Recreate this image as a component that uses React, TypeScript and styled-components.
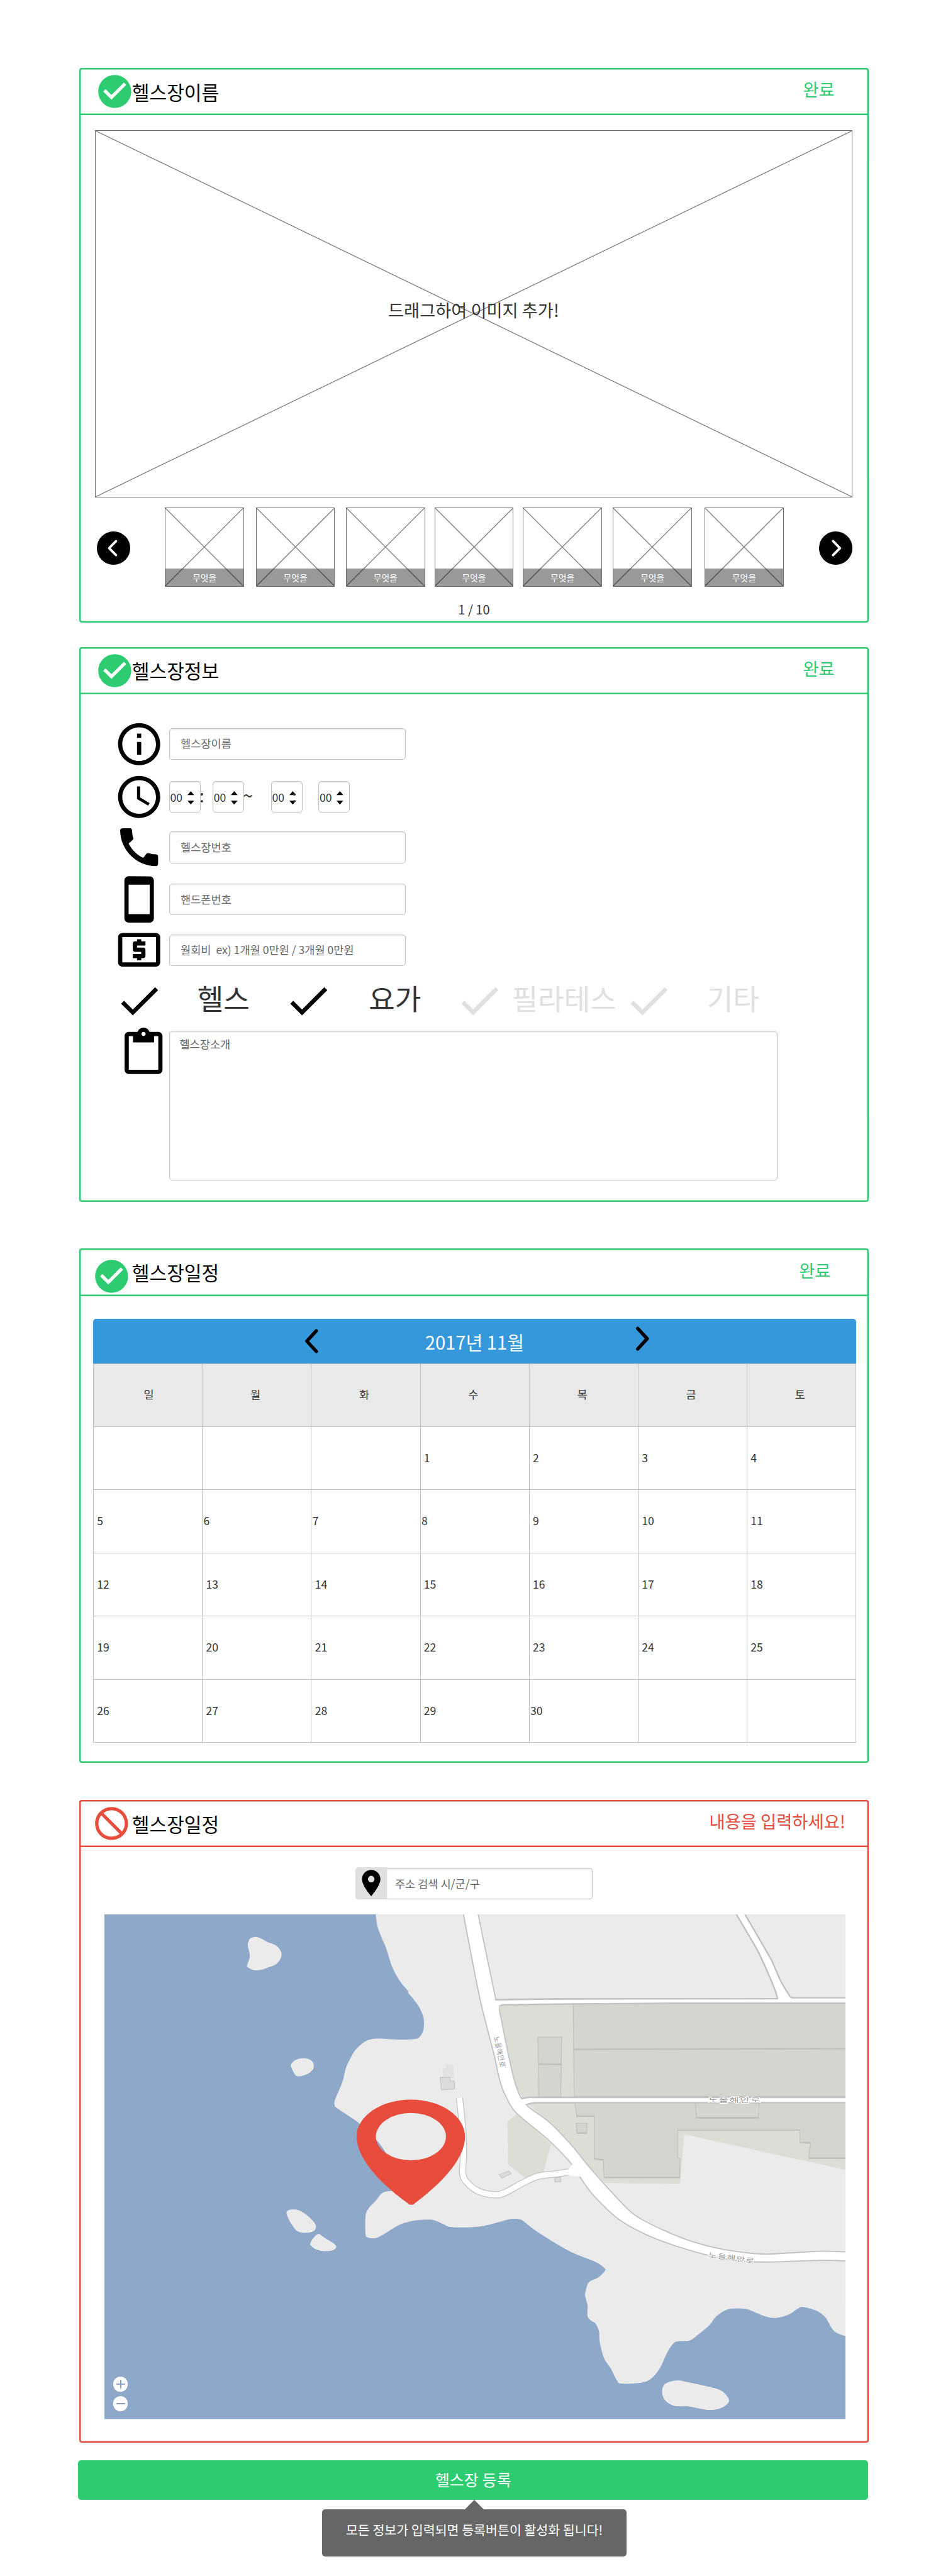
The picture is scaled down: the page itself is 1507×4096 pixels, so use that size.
import React from "react";
import styled, { createGlobalStyle, css } from "styled-components";
import {
  MdCheckCircle,
  MdBlock,
  MdOutlineInfo,
  MdAccessTime,
  MdCall,
  MdSmartphone,
  MdLocalAtm,
  MdCheck,
  MdContentPaste,
  MdPlace,
} from "react-icons/md";

/* ---------- tokens ---------- */

const SCALE = 1507 / 2400;
// Design units (2400-wide artboard) to CSS pixels.
const u = (n: number) => `${(n * SCALE).toFixed(3)}px`;

const GREEN = "#2ecc71";
const RED = "#e74c3c";
const BLUE = "#3498db";
const INK = "#333333";
const LINE = "#c0c0c0";
const WIRE = "#707070";

const GlobalStyle = createGlobalStyle`
  *, *::before, *::after { box-sizing: border-box; }
  html, body { margin: 0; padding: 0; background: #fff; }
  body {
    font-family: "Noto Sans CJK KR", "Noto Sans", sans-serif;
    color: ${INK};
    -webkit-font-smoothing: antialiased;
  }
`;

/* ---------- page and panels ---------- */

const Page = styled.main`
  width: 1507px;
  height: 4096px;
  overflow: hidden;
  padding: ${u(172)} 0 0 ${u(200)};
  display: flex;
  flex-direction: column;
  align-items: flex-start;
`;

const Panel = styled.section<{ $tone: string; $h: number; $after: number }>`
  flex: none;
  width: ${u(2000)};
  height: ${(p) => u(p.$h)};
  margin-bottom: ${(p) => u(p.$after)};
  border-radius: 4px;
  box-shadow: inset 0 0 0 2.5px ${(p) => p.$tone};
`;

const PanelHeader = styled.header<{ $tone: string; $end: number }>`
  height: ${u(120)};
  display: flex;
  align-items: center;
  padding-right: ${(p) => u(p.$end)};
  box-shadow: inset 0 -2.5px 0 ${(p) => p.$tone};
`;

const StatusSlot = styled.div<{ $inset: number; $drop: number }>`
  flex: none;
  width: ${u(134)};
  height: ${u(100)};
  padding-left: ${(p) => u(p.$inset)};
  margin-top: ${(p) => u(p.$drop * 2)};
  svg {
    display: block;
    width: ${u(100)};
    height: ${u(100)};
    color: ${GREEN};
  }
`;

const StatusSlotError = styled(StatusSlot)`
  svg {
    color: ${RED};
    transform: scaleX(-1);
  }
`;

const Title = styled.h2`
  margin: ${u(3)} 0 0;
  font-size: ${u(48)};
  line-height: ${u(70)};
  font-weight: 400;
  color: #000;
`;

const State = styled.span<{ $tone: string }>`
  margin-left: auto;
  margin-bottom: ${u(14)};
  font-size: ${u(43.6)};
  line-height: ${u(64)};
  color: ${(p) => p.$tone};
`;

/* ---------- gallery ---------- */

const WireBox = styled.div`
  position: relative;
  border: 1px solid ${WIRE};
`;

const WireCross = styled.svg`
  position: absolute;
  inset: 0;
  width: 100%;
  height: 100%;
`;

const Hero = styled(WireBox)`
  margin: ${u(38)} 0 0 ${u(40)};
  width: ${u(1918)};
  height: ${u(930)};
  display: flex;
  align-items: center;
  justify-content: center;
  padding-bottom: ${u(24)};
`;

const HeroText = styled.span`
  position: relative;
  font-size: ${u(43.4)};
  line-height: ${u(64)};
`;

const Strip = styled.div`
  margin-top: ${u(26)};
  height: ${u(200)};
  padding-left: ${u(46)};
  padding-right: ${u(42)};
  display: flex;
  align-items: center;
`;

const RoundButton = styled.button`
  flex: none;
  width: ${u(84)};
  height: ${u(84)};
  margin: ${u(4)} 0 0;
  padding: 0;
  border: 0;
  border-radius: 50%;
  background: #000;
  svg {
    display: block;
    width: 100%;
    height: 100%;
  }
`;

const Thumbs = styled.div`
  flex: 1;
  padding-left: ${u(88)};
  display: flex;
`;

const Thumb = styled(WireBox)<{ $gap: number }>`
  flex: none;
  width: ${u(200)};
  height: ${u(200)};
  margin-right: ${(p) => u(p.$gap)};
  display: flex;
  flex-direction: column;
  justify-content: flex-end;
`;

const Caption = styled.span`
  position: relative;
  height: ${u(45)};
  display: flex;
  align-items: center;
  justify-content: center;
  background: rgba(0, 0, 0, 0.4);
  color: #fff;
  font-size: ${u(22)};
  line-height: ${u(32)};
`;

const Pager = styled.div`
  margin-top: ${u(33)};
  text-align: center;
  font-size: ${u(32)};
  line-height: ${u(48)};
`;

/* ---------- info form ---------- */

const FormRow = styled.div<{ $top: number }>`
  margin-top: ${(p) => u(p.$top)};
  height: ${u(80)};
  padding-left: ${u(88)};
  display: flex;
  align-items: center;
`;

const RowIcon = styled.div`
  flex: none;
  width: ${u(140)};
  svg {
    display: block;
    width: ${u(128)};
    height: ${u(128)};
    color: #000;
  }
`;

const fieldLook = css`
  border: 1px solid ${LINE};
  border-radius: ${u(8)};
  background: #fff;
  box-shadow: inset 0 ${u(2)} ${u(4)} rgba(0, 0, 0, 0.1);
  font-size: ${u(28)};
  line-height: ${u(40)};
`;

const Field = styled.div`
  ${fieldLook}
  width: ${u(600)};
  height: ${u(80)};
  padding: 0 0 ${u(3)} ${u(27.5)};
  display: flex;
  align-items: center;
  color: #666;
  white-space: pre;
`;

const TimeBox = styled.div`
  ${fieldLook}
  flex: none;
  width: ${u(80)};
  height: ${u(80)};
  padding-left: ${u(1.4)};
  display: flex;
  align-items: center;
  svg {
    margin: ${u(4)} 0 0 ${u(12.5)};
    width: ${u(17)};
    height: ${u(34)};
  }
`;

const Separator = styled.span<{ $w: number; $shift: number }>`
  position: relative;
  flex: none;
  width: ${(p) => u(p.$w)};
  text-indent: ${(p) => u(p.$shift)};
  margin-bottom: ${u(10)};
  font-size: ${u(44)};
  line-height: ${u(64)};
  white-space: nowrap;
`;

const Checks = styled.div`
  margin-top: ${u(24)};
  height: ${u(128)};
  padding-left: ${u(88)};
  display: flex;
`;

const CheckItem = styled.div<{ $on: boolean; $extra: number }>`
  flex: none;
  width: ${(p) => u(428 + p.$extra)};
  display: flex;
  align-items: center;
  color: ${(p) => (p.$on ? INK : "#e0e0e0")};
  svg {
    flex: none;
    width: ${u(128)};
    height: ${u(128)};
    margin-right: ${(p) => u(p.$extra)};
    color: ${(p) => (p.$on ? "#000" : "#e0e0e0")};
  }
`;

const CheckLabel = styled.span`
  flex: 1;
  margin-bottom: ${u(14)};
  text-align: center;
  font-size: ${u(72)};
  line-height: ${u(104)};
  white-space: nowrap;
`;

const IntroRow = styled.div`
  margin-top: ${u(4)};
  padding-left: ${u(100)};
  display: flex;
  align-items: flex-start;
`;

const IntroIcon = styled(RowIcon)`
  width: ${u(128)};
`;

const TextArea = styled.div`
  ${fieldLook}
  margin-top: ${u(8)};
  width: ${u(1540)};
  height: ${u(380)};
  padding: ${u(12)} ${u(25)};
  color: #666;
`;

/* ---------- calendar ---------- */

const Calendar = styled.div`
  margin: ${u(58)} 0 0 ${u(36)};
  width: ${u(1932)};
`;

const MonthBar = styled.div`
  height: ${u(112)};
  padding-left: ${u(11)};
  border-radius: ${u(8)} ${u(8)} 0 0;
  background: ${BLUE};
  display: flex;
  justify-content: center;
  align-items: center;
  svg {
    flex: none;
    width: ${u(36)};
    height: ${u(62)};
    overflow: visible;
  }
`;

const MonthTitle = styled.span`
  width: ${u(802)};
  padding-right: ${u(12)};
  margin-top: ${u(4)};
  text-align: center;
  color: #fff;
  font-size: ${u(46.5)};
  line-height: ${u(70)};
`;

const Days = styled.div`
  display: grid;
  grid-template-columns: repeat(7, 1fr);
  grid-auto-rows: ${u(160)};
  border-right: 1px solid ${LINE};
  border-bottom: 1px solid ${LINE};
  font-size: ${u(28)};
  line-height: ${u(40)};
`;

const WeekdayCell = styled.div<{ $shift: number }>`
  display: flex;
  align-items: center;
  justify-content: center;
  padding-bottom: ${u(4)};
  padding-right: ${(p) => u(Math.max(0, -p.$shift * 2))};
  padding-left: ${(p) => u(Math.max(0, p.$shift * 2))};
  background: #e9e9e9;
  box-shadow: inset 1px 1px 0 ${LINE};
`;

const DayCell = styled.div`
  display: flex;
  align-items: center;
  padding: 0 0 ${u(3)} ${u(3.6)};
  white-space: pre;
  box-shadow: inset 1px 1px 0 ${LINE};
`;

/* ---------- location ---------- */

const Search = styled.div`
  margin: ${u(50)} auto 0;
  width: ${u(600)};
  height: ${u(82)};
  display: flex;
  align-items: flex-start;
`;

const SearchAddon = styled.div`
  flex: none;
  width: ${u(80)};
  height: ${u(81)};
  border-radius: ${u(8)} 0 0 ${u(8)};
  background: #e0e0e0;
  border-bottom: 1px solid ${LINE};
  svg {
    display: block;
    width: ${u(80)};
    height: ${u(80)};
    margin-top: ${u(1)};
    color: #000;
  }
`;

const SearchField = styled(Field)`
  margin-top: ${u(2)};
  width: ${u(520)};
  padding-left: ${u(20)};
  border-left: 0;
  border-radius: 0 ${u(8)} ${u(8)} 0;
`;

const MapFrame = styled.div`
  position: relative;
  margin: ${u(38)} 0 0 ${u(64)};
  width: ${u(1876)};
  height: ${u(1278)};
  > svg {
    display: block;
    width: 100%;
    height: 100%;
  }
`;

const ZoomControls = styled.div`
  position: absolute;
  left: ${u(22)};
  bottom: ${u(20)};
  display: flex;
  flex-direction: column;
  gap: ${u(12)};
`;

const ZoomButton = styled.button`
  width: ${u(38)};
  height: ${u(38)};
  padding: 0;
  border: 0;
  border-radius: 50%;
  background: #fff;
  svg {
    display: block;
    width: 100%;
    height: 100%;
  }
`;

/* ---------- footer ---------- */

const Submit = styled.button`
  flex: none;
  width: ${u(2000)};
  height: ${u(100)};
  margin: 0 0 0 ${u(-2)};
  padding: 0 0 ${u(4)};
  border: 0;
  border-radius: ${u(8)};
  background: ${GREEN};
  color: #fff;
  font-family: inherit;
  font-size: ${u(40)};
  line-height: ${u(58)};
`;

const TipArrow = styled.div`
  flex: none;
  margin-left: ${u(977)};
  border: ${u(24)} solid transparent;
  border-top-width: 0;
  border-bottom-color: #666;
`;

const Tip = styled.div`
  flex: none;
  margin-left: ${u(616)};
  width: ${u(770)};
  height: ${u(120)};
  padding-bottom: ${u(17)};
  border-radius: ${u(8)};
  background: #666;
  color: #fff;
  display: flex;
  align-items: center;
  justify-content: center;
  font-size: ${u(32.8)};
  line-height: ${u(46)};
  white-space: nowrap;
`;

/* ---------- drawings ---------- */

const Cross = () => (
  <WireCross viewBox="0 0 100 100" preserveAspectRatio="none">
    <path
      d="M0 0L100 100M100 0L0 100"
      stroke="#808080"
      strokeWidth="1.35"
      vectorEffect="non-scaling-stroke"
      fill="none"
    />
  </WireCross>
);

const RoundChevron = ({ next = false }: { next?: boolean }) => (
  <svg viewBox="0 0 84 84" fill="none">
    <path
      d={next ? "M35.5 24.5L53 42.5L35.5 60" : "M48.5 24.5L31 42.5L48.5 60"}
      stroke="#fff"
      strokeWidth="6"
      strokeLinecap="round"
      strokeLinejoin="round"
    />
  </svg>
);

const MonthChevron = ({ next = false }: { next?: boolean }) => (
  <svg viewBox="0 0 36 62" fill="none">
    <path
      d={next ? "M6 -1L30 25L6 51" : "M30 5L6 31L30 57"}
      stroke="#000"
      strokeWidth="8.6"
      strokeLinecap="round"
      strokeLinejoin="round"
    />
  </svg>
);

const Stepper = () => (
  <svg viewBox="0 0 17 34">
    <path d="M0 10L8.5 0L17 10zM0 24L8.5 34L17 24z" fill="#000" />
  </svg>
);

type Pt = [number, number];

const parse = (s: string): Pt[] =>
  s
    .trim()
    .split(/\s+/)
    .map((p) => p.split(",").map(Number) as Pt);

// Catmull-Rom spline through the points, as cubic segments.
const spline = (pts: Pt[], closed = false) => {
  const n = pts.length;
  const at = (i: number) =>
    closed ? pts[(i + n) % n] : pts[Math.max(0, Math.min(n - 1, i))];
  let d = "";
  for (let i = 0; i < (closed ? n : n - 1); i++) {
    const [a, b, c, e] = [at(i - 1), at(i), at(i + 1), at(i + 2)];
    const x1 = b[0] + (c[0] - a[0]) / 6;
    const y1 = b[1] + (c[1] - a[1]) / 6;
    const x2 = c[0] - (e[0] - b[0]) / 6;
    const y2 = c[1] - (e[1] - b[1]) / 6;
    d += `C${x1.toFixed(1)} ${y1.toFixed(1)} ${x2.toFixed(1)} ${y2.toFixed(1)} ${c[0]} ${c[1]}`;
  }
  return d;
};

const COAST = parse(`
951,4848 954,4872 959,4890 968,4912 977,4933 985,4959 993,4982 1004,5004 1017,5024 1031,5040 1034,5048
1045,5061 1059,5080 1071,5106 1073,5127 1070,5145 1060,5160 1044,5164 1004,5165 973,5163 947,5163 927,5168
913,5178 898,5193 886,5214 875,5238 867,5271 856,5298 847,5320 847,5332 855,5340 900,5370 912,5380 952,5418
979,5456 998,5500 1004,5546 992,5548 968,5553 951,5573 933,5592 925,5612 925,5658 931,5666 949,5668 968,5660
995,5643 1021,5630 1060,5622 1096,5622 1119,5631 1143,5640 1198,5640 1231,5635 1270,5625 1297,5619 1318,5621
1336,5634 1356,5649 1408,5682 1454,5707 1507,5728 1530,5744 1530,5752 1513,5768 1491,5779 1483,5799 1481,5814
1487,5838 1487,5865 1496,5877 1508,5885 1516,5904 1518,5931 1529,5972 1546,5998 1562,6029 1573,6036 1623,6034
1649,6023 1671,5996 1687,5961 1704,5935 1717,5929 1746,5927 1770,5910 1796,5888 1812,5867 1835,5851 1855,5846
1888,5847 1912,5856 1940,5867 1963,5870 1993,5863 2017,5848 2032,5842 2065,5851 2088,5867 2105,5895 2118,5908
2140,5916`);

const ISLANDS = [
  "629,4917 633,4909 647,4905 660,4909 679,4919 700,4928 712,4945 709,4962 697,4975 679,4982 659,4989 642,4989 627,4982 625,4978 632,4954 627,4927",
  "736,5230 744,5219 759,5213 776,5213 789,5219 794,5230 791,5242 776,5253 759,5258 749,5256 741,5244",
  "726,5600 742,5595 762,5600 784,5616 799,5635 795,5649 778,5654 754,5651 738,5633 728,5614",
  "795,5665 807,5657 820,5666 843,5680 851,5690 843,5698 824,5701 801,5697 787,5687 786,5679",
  "1680,6040 1697,6031 1717,6028 1743,6033 1816,6050 1838,6065 1845,6081 1829,6096 1796,6103 1743,6094 1708,6093 1684,6079 1676,6060",
].map(parse);

const ROAD_WEST = parse(`1170,4832 1198,4979 1219,5081 1250,5202 1267,5276 1284,5316 1308,5352 1391,5422 1448,5482
1474,5522 1507,5565 1566,5620 1638,5660 1724,5692 1822,5718 1914,5728 2019,5726 2085,5724 2150,5726`);
const ROAD_EAST = parse(`2150,5703 2085,5701 2019,5704 1927,5708 1835,5697 1757,5678 1678,5647 1605,5608 1546,5549
1494,5491 1446,5432 1391,5375 1332,5330 1307,5285 1288,5209 1262,5081 1255,5064 1207,4832`);

const roadPath = `M1170 4832${spline(ROAD_WEST)}L2150 5703${spline(ROAD_EAST)}Z`;
const lanePath = `M1163 5312${spline(
  parse(`1163,5312 1171,5394 1173,5456 1171,5503 1181,5526 1211,5549 1251,5558 1277,5553
1323,5528 1362,5511 1408,5505 1465,5497`)
)}`;

const EDGE = "#c2c3c1";
const WALL = "#bfc2bb";

const RoadName = ({
  x,
  y,
  r,
  sx,
  size,
  gap,
}: {
  x: number;
  y: number;
  r: string;
  sx: number;
  size: number;
  gap: number;
}) => (
  <text
    transform={`translate(${x} ${y}) ${r} scale(${sx} 1)`}
    fontSize={size}
    letterSpacing={gap}
    fill="#999"
    stroke="#fff"
    strokeWidth="3"
    paintOrder="stroke"
  >
    노을해안로
  </text>
);

const MapDrawing = () => (
  <svg viewBox="264 4848 1876 1278" preserveAspectRatio="none">
    <rect x="264" y="4848" width="1876" height="1278" fill="#8ea8c9" />
    <g fill="#ebebeb">
      <path d={`M951 4848${spline(COAST)}V4848Z`} />
      {ISLANDS.map((pts, i) => (
        <path key={i} d={`M${pts[0][0]} ${pts[0][1]}${spline(pts, true)}Z`} />
      ))}
    </g>
    <g fill="#dbded5">
      <path d="M1262 5081L1281 5077L2140 5073V5311H1322L1307 5285L1288 5209Z" />
      <path d="M1332 5325H2140V5495L1732 5405L1721 5531L1530 5528L1494 5491L1446 5432L1391 5375Z" />
      <path d="M1284 5372L1307 5355L1395 5429L1373 5510L1333 5518L1286 5481Z" />
    </g>
    <g fill="#d3d6cf" stroke={WALL} strokeWidth="2">
      <path d="M1451 5071H2150V5311H1453Z" />
      <path d="M1361.5 5158.5H1422L1419 5310H1363.5Z" />
      <path d="M1454.5 5325H2150V5467L2047 5465L2052 5428L2025 5426V5394H1715V5464L1721 5465V5514H1529L1527 5470L1504 5467V5359L1460 5360Z" />
      <path d="M1759.6 5325H1921.5L1920 5363H1763Z" />
      <path d="M1458.6 5377H1485.4V5402H1460Z" />
    </g>
    <g fill="none" stroke={WALL} strokeWidth="4">
      <path d="M1451 5189.5L2140 5188M1361.5 5227L1422 5228M1453 5310H2140" />
      <path d="M1460 5359H1504M1763 5363H1920M1460 5402H1485M1504 5467L1527 5470M1529 5514H1721M2025 5426H2052M2047 5465.5H2140" />
      <path d="M1715 5394H2025" strokeWidth="3" />
    </g>
    <path d="M1119 5238L1129 5236.6L1129.5 5228.5L1147 5227.4L1150 5262.6L1122 5260Z" fill="#e2e2e2" />
    <g fill="#dcdcdc" stroke="#c6c6c6" strokeWidth="2">
      <path d="M1114 5260.5H1139L1139.5 5270H1149.6L1150 5290L1117.4 5292.5Z" />
      <path d="M1264 5507L1287.5 5498L1294 5504L1270.5 5516Z" />
      <path d="M1404.5 5514H1419V5525H1404.5Z" />
    </g>
    <g fill="#fff" stroke={EDGE} strokeWidth="4" strokeLinejoin="round">
      <path d="M1250 5064L1424 5062L1968 5061.5C1966 5046 1953 5018 1942 4992C1932 4970 1920 4942 1911 4928L1858 4838H1880L1952.5 4963C1962 4983 1967 4998 1976.6 5017.5C1984 5032 1992 5043 1996 5050Q2000 5059 2006 5059H2150V5073H1700L1446 5075L1281 5077Q1262 5077 1262 5084Z" />
      <path d="M1318 5316Q1325 5311.5 1345 5311.5H2150V5325H1360Q1340 5325 1330 5332Z" />
    </g>
    <path d={lanePath} fill="none" stroke={EDGE} strokeWidth="18" />
    <path d={lanePath} fill="none" stroke="#fff" strokeWidth="14" />
    <path d={roadPath} fill="#fff" stroke={EDGE} strokeWidth="3" />
    <g fill="#fff">
      <path d="M1240 5066L1270 5066V5075L1263 5078V5088L1240 5080Z" />
      <path d="M1310 5318L1345 5313.5V5323L1330 5329Z" />
      <path d="M1435 5497L1450 5480L1470 5512L1430 5508Z" />
    </g>
    <RoadName x={1250} y={5158} r="rotate(78)" sx={0.92} size={18} gap={1} />
    <RoadName x={1793} y={5324} r="" sx={1.55} size={17} gap={1.6} />
    <RoadName x={1792} y={5716} r="rotate(8)" sx={1.4} size={17} gap={1.4} />
    <path
      fillRule="evenodd"
      fill={RED}
      d="M1040 5317C1116 5317 1177 5359 1177 5411C1177 5470 1110 5535 1049 5580Q1041 5587 1033 5580C972 5537 902.6 5470 902.6 5411C902.6 5359 964 5317 1040 5317ZM951.3 5410.7A88.7 60 0 1 0 1128.7 5410.7A88.7 60 0 1 0 951.3 5410.7Z"
    />
  </svg>
);

/* ---------- data ---------- */

const THUMB_GAPS = [30, 28, 24, 24, 28, 32, 0];
const WEEKDAYS = ["일", "월", "화", "수", "목", "금", "토"];
const TIGHT_DAYS = [6, 7, 8, 30];
const CHECK_ITEMS = [
  { label: "헬스", on: true, extra: 0 },
  { label: "요가", on: true, extra: 6 },
  { label: "필라테스", on: false, extra: 0 },
  { label: "기타", on: false, extra: 0 },
];

const dayText = (index: number) => {
  const day = index - 2;
  if (day < 1 || day > 30) return "";
  return TIGHT_DAYS.includes(day) ? `${day}` : ` ${day}`;
};

/* ---------- app ---------- */

export default function App() {
  return (
    <>
      <GlobalStyle />
      <Page>
        <Panel $tone={GREEN} $h={1404} $after={62}>
          <PanelHeader $tone={GREEN} $end={87}>
            <StatusSlot $inset={40} $drop={0}>
              <MdCheckCircle />
            </StatusSlot>
            <Title>헬스장이름</Title>
            <State $tone={GREEN}>완료</State>
          </PanelHeader>
          <Hero>
            <Cross />
            <HeroText>드래그하여 이미지 추가!</HeroText>
          </Hero>
          <Strip>
            <RoundButton aria-label="이전">
              <RoundChevron />
            </RoundButton>
            <Thumbs>
              {THUMB_GAPS.map((gap, i) => (
                <Thumb key={i} $gap={gap}>
                  <Cross />
                  <Caption>무엇을</Caption>
                </Thumb>
              ))}
            </Thumbs>
            <RoundButton aria-label="다음">
              <RoundChevron next />
            </RoundButton>
          </Strip>
          <Pager>1 / 10</Pager>
        </Panel>

        <Panel $tone={GREEN} $h={1406} $after={118}>
          <PanelHeader $tone={GREEN} $end={87}>
            <StatusSlot $inset={40} $drop={0}>
              <MdCheckCircle />
            </StatusSlot>
            <Title>헬스장정보</Title>
            <State $tone={GREEN}>완료</State>
          </PanelHeader>
          <FormRow $top={86}>
            <RowIcon>
              <MdOutlineInfo />
            </RowIcon>
            <Field>헬스장이름</Field>
          </FormRow>
          <FormRow $top={54}>
            <RowIcon>
              <MdAccessTime />
            </RowIcon>
            <TimeBox>
              00
              <Stepper />
            </TimeBox>
            <Separator $w={30} $shift={-3}>
              :
            </Separator>
            <TimeBox>
              00
              <Stepper />
            </TimeBox>
            <Separator $w={68} $shift={-3}>
              ~
            </Separator>
            <TimeBox>
              00
              <Stepper />
            </TimeBox>
            <Separator $w={40} $shift={-27}>
              :
            </Separator>
            <TimeBox>
              00
              <Stepper />
            </TimeBox>
          </FormRow>
          <FormRow $top={48}>
            <RowIcon>
              <MdCall />
            </RowIcon>
            <Field>헬스장번호</Field>
          </FormRow>
          <FormRow $top={52}>
            <RowIcon>
              <MdSmartphone />
            </RowIcon>
            <Field>핸드폰번호</Field>
          </FormRow>
          <FormRow $top={48}>
            <RowIcon>
              <MdLocalAtm />
            </RowIcon>
            <Field>{"월회비  ex) 1개월 0만원 / 3개월 0만원"}</Field>
          </FormRow>
          <Checks>
            {CHECK_ITEMS.map((item) => (
              <CheckItem key={item.label} $on={item.on} $extra={item.extra}>
                <MdCheck />
                <CheckLabel>{item.label}</CheckLabel>
              </CheckItem>
            ))}
          </Checks>
          <IntroRow>
            <IntroIcon>
              <MdContentPaste />
            </IntroIcon>
            <TextArea>헬스장소개</TextArea>
          </IntroRow>
        </Panel>

        <Panel $tone={GREEN} $h={1302} $after={94}>
          <PanelHeader $tone={GREEN} $end={97}>
            <StatusSlot $inset={32} $drop={10}>
              <MdCheckCircle />
            </StatusSlot>
            <Title>헬스장일정</Title>
            <State $tone={GREEN}>완료</State>
          </PanelHeader>
          <Calendar>
            <MonthBar>
              <MonthChevron />
              <MonthTitle>2017년 11월</MonthTitle>
              <MonthChevron next />
            </MonthBar>
            <Days>
              {WEEKDAYS.map((name, i) => (
                <WeekdayCell key={name} $shift={i === 0 ? 3 : -3}>
                  {name}
                </WeekdayCell>
              ))}
              {Array.from({ length: 35 }, (_, i) => (
                <DayCell key={i}>{dayText(i)}</DayCell>
              ))}
            </Days>
          </Calendar>
        </Panel>

        <Panel $tone={RED} $h={1628} $after={44}>
          <PanelHeader $tone={RED} $end={60}>
            <StatusSlotError $inset={32} $drop={0}>
              <MdBlock />
            </StatusSlotError>
            <Title>헬스장일정</Title>
            <State $tone={RED}>내용을 입력하세요!</State>
          </PanelHeader>
          <Search>
            <SearchAddon>
              <MdPlace />
            </SearchAddon>
            <SearchField>주소 검색 시/군/구</SearchField>
          </Search>
          <MapFrame>
            <MapDrawing />
            <ZoomControls>
              <ZoomButton aria-label="확대">
                <svg viewBox="0 0 38 38">
                  <path d="M8 19H30M19 8V30" stroke="#7f9cc2" strokeWidth="3" />
                </svg>
              </ZoomButton>
              <ZoomButton aria-label="축소">
                <svg viewBox="0 0 38 38">
                  <path d="M8 19H30" stroke="#7f9cc2" strokeWidth="3" />
                </svg>
              </ZoomButton>
            </ZoomControls>
          </MapFrame>
        </Panel>

        <Submit>헬스장 등록</Submit>
        <TipArrow />
        <Tip>모든 정보가 입력되면 등록버튼이 활성화 됩니다!</Tip>
      </Page>
    </>
  );
}
